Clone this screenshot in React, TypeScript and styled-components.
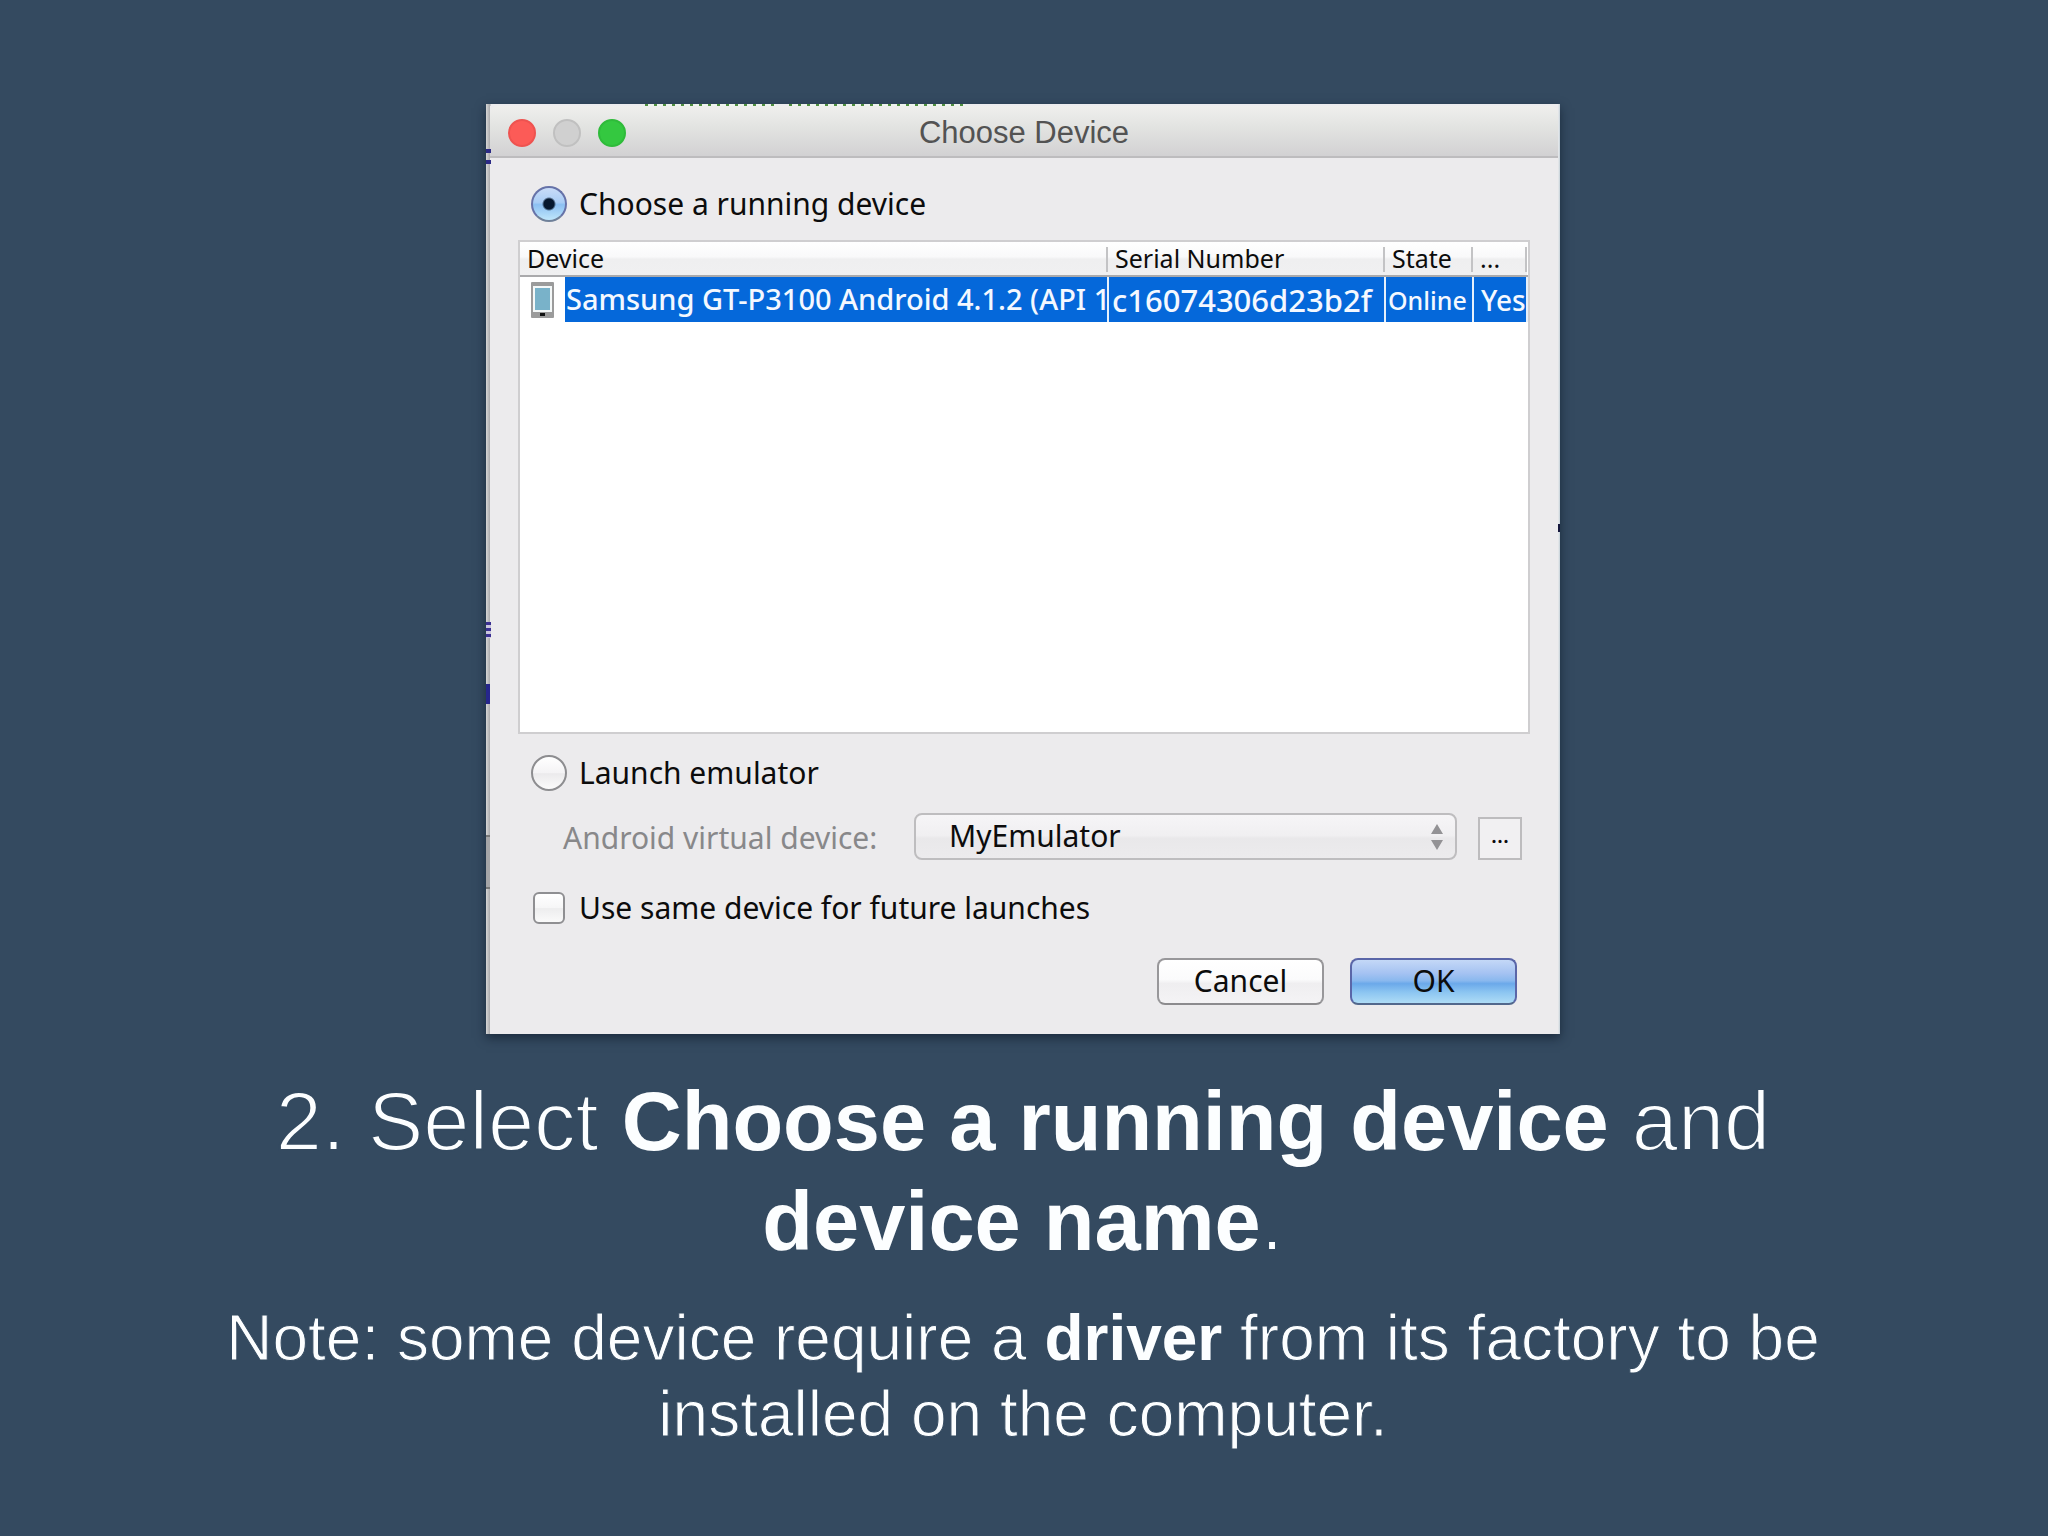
import React, { useState } from "react";
import styled, { createGlobalStyle } from "styled-components";

const slide = "#344a60";
const uiFont = `"Lucida Grande", "Noto Sans", "Open Sans", sans-serif`;
const textFont = `"Liberation Sans", Arial, sans-serif`;

const GlobalStyle = createGlobalStyle`
  * { box-sizing: border-box; }
  body { margin: 0; background: ${slide}; }
`;

const Slide = styled.main`
  min-height: 100vh;
  padding: 104px 26px 48px 24px;
  display: flex;
  flex-direction: column;
  align-items: center;
  background: ${slide};
  color: #fcfeff;
  font-family: ${textFont};
`;

const Figure = styled.figure`
  position: relative;
  width: 100%;
  max-width: 1074px;
  margin: 0 0 38px;
  padding: 2px 2px 0 4px;
  background: linear-gradient(90deg, #d6d6d6 0, #a9a9ab 4px, #ececee 5px, #ececee calc(100% - 2px), #c3d0d8 100%);
  box-shadow: 0 4px 10px rgba(10, 22, 36, 0.6);
`;

const Peek = styled.span<{ $x: string; $y: number; $w: number; $h: number; $paint: string }>`
  position: absolute;
  left: ${(p) => p.$x};
  top: ${(p) => p.$y}px;
  width: ${(p) => p.$w}px;
  height: ${(p) => p.$h}px;
  background: ${(p) => p.$paint};
`;

const Dialog = styled.section`
  color: #0c0c0c;
  background: #ecebed;
  font-family: ${uiFont};
  font-size: 30px;
  line-height: 36px;
`;

const TitleBar = styled.header`
  display: grid;
  grid-template-columns: 1fr auto 1fr;
  align-items: center;
  height: 52px;
  padding: 4px 18px 0 18px;
  border-bottom: 2px solid #bdbcbe;
  border-radius: 8px 8px 0 0;
  background: linear-gradient(#efefed, #e3e4e2 40%, #d2d1d3);
`;

const Lights = styled.div`
  display: flex;
  gap: 17px;
`;

const Light = styled.button<{ $fill: string; $edge: string }>`
  width: 28px;
  height: 28px;
  padding: 0;
  border: 2px solid ${(p) => p.$edge};
  border-radius: 50%;
  background: ${(p) => p.$fill};
`;

const Title = styled.h1`
  margin: 0;
  font: 400 31px/36px ${textFont};
  color: #535353;
`;

const Body = styled.form`
  padding: 28px 28px 29px;
`;

const Choice = styled.label<{ $gap: number }>`
  display: flex;
  align-items: center;
  gap: 12px;
  margin: ${(p) => p.$gap}px 0 0 13px;
`;

const Radio = styled.input`
  appearance: none;
  width: 36px;
  height: 36px;
  margin: 0;
  border: 2px solid #8d8d90;
  border-radius: 50%;
  background: linear-gradient(#fff, #f4f3f5 50%, #ebeaec 52%, #fbfbfb);
  &:checked {
    border-color: #6672a8;
    border-bottom-color: #6f8099;
    background: radial-gradient(circle at 50% 50%, #06182f 0 5px, transparent 7px),
      linear-gradient(#c9dcf8, #a9cdf5 45%, #8cc0f2 52%, #bfe6fb);
  }
`;

const Tick = styled.input`
  appearance: none;
  width: 32px;
  height: 32px;
  margin: 0 2px;
  border: 2px solid #8f8f92;
  border-radius: 6px;
  background: linear-gradient(#fff, #f6f6f7 50%, #ededee 52%, #fafafa);
  &:checked { background: #7db7f0; }
`;

const TableBox = styled.div`
  height: 494px;
  margin-top: 18px;
  border: 2px solid #cfced0;
  background: #fff;
  overflow: hidden;
`;

const Table = styled.table`
  width: 100%;
  border-collapse: collapse;
  table-layout: fixed;
`;

const Head = styled.th`
  position: relative;
  height: 34px;
  padding: 0 0 2px 7px;
  border-bottom: 2px solid #aaaaac;
  background: linear-gradient(#fff, #f9f9fa 45%, #efeff0 52%, #f0f0f1);
  font-size: 25px;
  font-weight: 400;
  line-height: 30px;
  text-align: left;
  white-space: nowrap;
  &::after {
    content: "";
    position: absolute;
    right: 0;
    top: 5px;
    width: 2px;
    height: 25px;
    background: #c3c3c5;
  }
`;

const Cell = styled.td<{ $pad: number; $size: number }>`
  height: 45px;
  padding: 0 0 0 ${(p) => p.$pad}px;
  border-right: 2px solid #e6f0fb;
  background: #0568da;
  color: #f4f8ff;
  font-size: ${(p) => p.$size}px;
  font-weight: 500;
  line-height: 44px;
  white-space: nowrap;
  overflow: hidden;
`;

const DeviceCell = styled(Cell)`
  background: #fff;
`;

const DeviceName = styled.div`
  display: flex;
  align-items: center;
  gap: 11px;
`;

const Selected = styled.span`
  flex: 1;
  height: 45px;
  padding-left: 1px;
  overflow: hidden;
  background: #0568da;
`;

const EmulatorRow = styled.div`
  display: flex;
  align-items: flex-end;
  margin: 22px 8px 30px 45px;
`;

const Caption = styled.label`
  width: 351px;
  line-height: 44px;
  color: #88888a;
`;

const SelectWrap = styled.div`
  flex: 1;
  display: grid;
  align-items: center;
  & > * { grid-area: 1 / 1; }
  & > svg { justify-self: end; margin-right: 14px; pointer-events: none; }
`;

const Select = styled.select`
  appearance: none;
  width: 100%;
  height: 47px;
  padding: 0 48px 2px 33px;
  border: 2px solid #bebdbf;
  border-radius: 8px;
  background: linear-gradient(#f6f5f7, #f0eff1 48%, #e9e8ea 54%, #ecebed);
  color: #0c0c0c;
  font: inherit;
`;

const More = styled.button`
  width: 44px;
  height: 43px;
  margin-left: 21px;
  padding: 0 0 10px;
  border: 2px solid #bdbcbe;
  background: #f1f0f2;
  color: #0c0c0c;
  font: 500 22px/28px ${uiFont};
`;

const Actions = styled.div`
  display: flex;
  justify-content: flex-end;
  gap: 26px;
  margin: 32px 13px 0 0;
`;

const Action = styled.button<{ $primary?: boolean }>`
  width: 167px;
  height: 47px;
  padding: 0 0 2px;
  border: 2px solid ${(p) => (p.$primary ? "#5a66a8" : "#98979a")};
  border-bottom-color: ${(p) => (p.$primary ? "#52688c" : "#8c8b8e")};
  border-radius: 8px;
  background: ${(p) =>
    p.$primary
      ? "linear-gradient(#c4d8f7, #a6c3f2 30%, #8ab8ee 48%, #6ba9ea 55%, #8cc5f1 75%, #aedcf6)"
      : "linear-gradient(#fff, #fbfbfc 45%, #efeef0 55%, #f4f3f5)"};
  color: #0c0c0c;
  font: inherit;
`;

/* The outline in the slide colour thins the regular face to a light one. */
const Headline = styled.h2`
  width: 80%;
  margin: 0 0 28px;
  font-size: 83px;
  font-weight: 400;
  line-height: 100px;
  text-align: center;
  -webkit-text-stroke: 2px ${slide};
`;

const Note = styled.p`
  width: 80%;
  margin: 0;
  font-size: 64px;
  line-height: 76px;
  text-align: center;
  -webkit-text-stroke: 1px ${slide};
`;

const Strong = styled.strong`
  font-weight: 700;
  -webkit-text-stroke: 0;
`;

const PhoneIcon = () => (
  <svg width="23" height="36" viewBox="0 0 23 36" aria-hidden="true">
    <rect width="23" height="36" rx="1" fill="#9b9b9b" />
    <rect x="2" y="4" width="19" height="26" fill="#f4f8f8" />
    <rect x="4" y="6" width="15" height="22" fill="#79b2c9" />
    <rect x="9" y="31" width="5" height="3" fill="#111" />
  </svg>
);

const Arrows = () => (
  <svg width="12" height="26" viewBox="0 0 12 26" aria-hidden="true">
    <path d="M6 0L12 10H0ZM0 16H12L6 26Z" fill="#939295" />
  </svg>
);

export default function App() {
  const [target, setTarget] = useState("running");
  const [same, setSame] = useState(false);

  return (
    <>
      <GlobalStyle />
      <Slide>
        <Figure>
          <Dialog aria-labelledby="dialog-title">
            <TitleBar>
              <Lights>
                <Light aria-label="Close" $fill="#fc5b57" $edge="#ee5350" />
                <Light aria-label="Minimize" $fill="#d0d0d0" $edge="#c0c0c0" />
                <Light aria-label="Zoom" $fill="#34c840" $edge="#2fbb3a" />
              </Lights>
              <Title id="dialog-title">Choose Device</Title>
            </TitleBar>
            <Body onSubmit={(e) => e.preventDefault()}>
              <Choice $gap={0}>
                <Radio type="radio" name="target" checked={target === "running"} onChange={() => setTarget("running")} />
                Choose a running device
              </Choice>
              <TableBox>
                <Table>
                  <colgroup>
                    <col />
                    <col width="277" />
                    <col width="88" />
                    <col width="54" />
                  </colgroup>
                  <thead>
                    <tr>
                      <Head>Device</Head>
                      <Head>Serial Number</Head>
                      <Head>State</Head>
                      <Head>...</Head>
                    </tr>
                  </thead>
                  <tbody>
                    <tr>
                      <DeviceCell $pad={11} $size={29}>
                        <DeviceName>
                          <PhoneIcon />
                          <Selected>Samsung GT-P3100 Android 4.1.2 (API 1</Selected>
                        </DeviceName>
                      </DeviceCell>
                      <Cell $pad={3} $size={31}>c16074306d23b2f</Cell>
                      <Cell $pad={2} $size={25}>Online</Cell>
                      <Cell $pad={7} $size={28}>Yes</Cell>
                    </tr>
                  </tbody>
                </Table>
              </TableBox>
              <Choice $gap={21}>
                <Radio type="radio" name="target" checked={target === "emulator"} onChange={() => setTarget("emulator")} />
                Launch emulator
              </Choice>
              <EmulatorRow>
                <Caption htmlFor="avd">Android virtual device:</Caption>
                <SelectWrap>
                  <Select id="avd">
                    <option>MyEmulator</option>
                  </Select>
                  <Arrows />
                </SelectWrap>
                <More type="button">...</More>
              </EmulatorRow>
              <Choice $gap={0}>
                <Tick type="checkbox" checked={same} onChange={() => setSame(!same)} />
                Use same device for future launches
              </Choice>
              <Actions>
                <Action type="button">Cancel</Action>
                <Action $primary>OK</Action>
              </Actions>
            </Body>
          </Dialog>
          <Peek $x="159px" $y={0} $w={131} $h={2} $paint="repeating-linear-gradient(90deg, #4f8f3f 0 3px, #eef3ee 3px 9px)" />
          <Peek $x="303px" $y={0} $w={176} $h={2} $paint="repeating-linear-gradient(90deg, #4f8f3f 0 3px, #eef3ee 3px 9px)" />
          <Peek $x="0" $y={45} $w={5} $h={4} $paint="#2c2a86" />
          <Peek $x="0" $y={56} $w={5} $h={4} $paint="#2c2a86" />
          <Peek $x="0" $y={518} $w={5} $h={16} $paint="repeating-linear-gradient(#3a2f92 0 3px, #c9c5dc 3px 6px)" />
          <Peek $x="0" $y={580} $w={4} $h={20} $paint="#26268c" />
          <Peek $x="0" $y={731} $w={4} $h={54} $paint="linear-gradient(#777 0 2px, #a5a5a7 2px 52px, #777 52px)" />
          <Peek $x="calc(100% - 2px)" $y={420} $w={2} $h={8} $paint="#14163c" />
        </Figure>
        <Headline>
          2. Select <Strong>Choose a running device</Strong> and <Strong>device name</Strong>.
        </Headline>
        <Note>
          Note: some device require a <Strong>driver</Strong> from its factory to be installed on the computer.
        </Note>
      </Slide>
    </>
  );
}
